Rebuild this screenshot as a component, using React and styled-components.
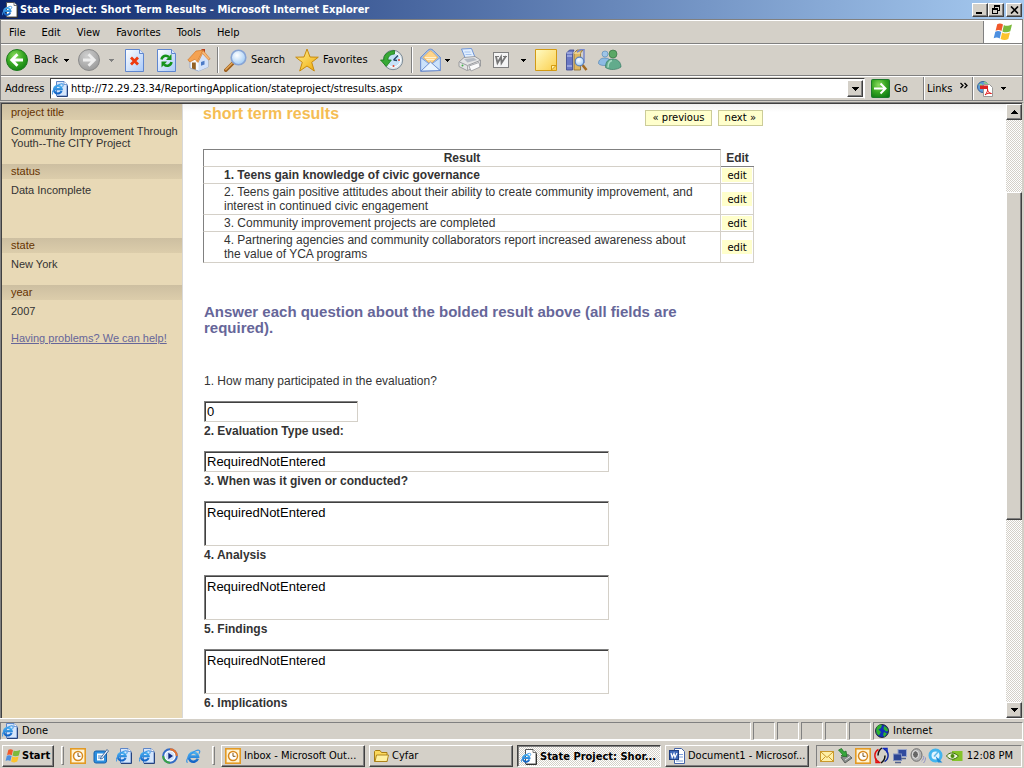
import React from "react";
import styled, { createGlobalStyle, css } from "styled-components";

const ui = `"DejaVu Sans Condensed", Tahoma, sans-serif`;
const arial = `"Liberation Sans", Arial, sans-serif`;
const verdana = `"DejaVu Sans", Verdana, sans-serif`;
const face = "#d4d0c8";

const GlobalStyle = createGlobalStyle`
  * { box-sizing: border-box; }
  body { margin: 0; background: ${face}; font: 11px/14px ${ui}; color: #000; }
  button { font: inherit; color: inherit; margin: 0; padding: 0; }
  svg { display: block; flex: none; }
`;

const raised = css`
  border: 1px solid;
  border-color: #fff #404040 #404040 #fff;
  box-shadow: inset -1px -1px #808080;
  background: ${face};
`;

const Desktop = styled.div`
  display: flex;
  flex-direction: column;
  height: 100vh;
`;

/* ---------- title bar ---------- */
const TitleBar = styled.header`
  display: flex;
  align-items: center;
  flex: none;
  height: 19px;
  padding: 0 2px;
  gap: 2px;
  background: linear-gradient(90deg, #0a246a, #a6caf0);
`;
const Title = styled.h1`
  flex: 1;
  margin: 0;
  font-size: 11px;
  line-height: 18px;
  color: #fff;
`;
const CaptionGroup = styled.div`
  display: flex;
`;
const CaptionButton = styled.button`
  ${raised}
  display: flex;
  align-items: center;
  justify-content: center;
  width: 16px;
  height: 14px;
`;

/* ---------- bars ---------- */
const Rebar = styled.div`
  flex: none;
  margin-right: 1px;
  border: 1px solid #808080;
  border-bottom: 0;
`;
const Band = styled.div`
  display: flex;
  border-top: 1px solid #fff;
  border-bottom: 1px solid #808080;
`;
const MenuBar = styled.nav`
  display: flex;
  flex: 1;
  align-items: center;
  height: 22px;
  padding: 1px 0 0 8px;
  gap: 16px;
`;
const MenuItem = styled.button`
  border: 0;
  background: none;
`;
const Throbber = styled.div`
  display: flex;
  align-items: center;
  justify-content: center;
  width: 39px;
  border-left: 1px solid #808080;
  background: #fff;
`;
const ToolBar = styled.div`
  display: flex;
  align-items: center;
  height: 30px;
  padding-left: 5px;
`;
const ToolButton = styled.button`
  display: flex;
  align-items: center;
  gap: ${(p) => p.$gap || 4}px;
  width: ${(p) => p.$width}px;
  height: 26px;
  border: 0;
  background: none;
  white-space: nowrap;
`;
const Divider = styled.div`
  width: 2px;
  height: 26px;
  margin: 0 ${(p) => p.$after || 5}px 0 0;
  border-left: 1px solid #808080;
  border-right: 1px solid #fff;
`;
const AddressBar = styled.form`
  display: flex;
  flex: 1;
  align-items: center;
  height: 23px;
  padding-left: 4px;
`;
const AddressLabel = styled.label`
  width: 45px;
`;
const Combo = styled.div`
  display: flex;
  align-items: center;
  flex: 1;
  height: 21px;
  padding: 0 1px 0 1px;
  gap: 3px;
  border: 1px solid;
  border-color: #404040 #fff ${face} #404040;
  background: #fff;
`;
const AddressInput = styled.input`
  flex: 1;
  min-width: 0;
  border: 0;
  padding: 0;
  background: none;
  font: 11px/14px ${ui};
  outline: 0;
`;
const DropButton = styled.button`
  ${raised}
  display: flex;
  align-items: center;
  justify-content: center;
  width: 16px;
  height: 17px;
`;
const GoButton = styled.button`
  display: flex;
  align-items: center;
  gap: 4px;
  width: 58px;
  height: 23px;
  padding-left: 6px;
  border: 0;
  background: none;
`;
const LinksCell = styled.button`
  display: flex;
  align-items: center;
  gap: 8px;
  width: 49px;
  height: 23px;
  padding-left: 3px;
  border: 0;
  border-left: 1px solid #808080;
  box-shadow: inset 1px 0 #fff;
  background: none;
`;
const PdfCell = styled(LinksCell)`
  width: 50px;
  padding-left: 4px;
`;

/* ---------- document ---------- */
const Viewport = styled.div`
  display: flex;
  flex: 1;
  min-height: 0;
  margin-top: 1px;
  border-top: 1px solid #808080;
  border-left: 1px solid #808080;
  border-right: 2px solid ${face};
`;
const Page = styled.div`
  display: flex;
  flex: 1;
  min-width: 0;
  overflow: hidden;
  border-top: 1px solid #404040;
  border-left: 1px solid #404040;
  background: #fff linear-gradient(#f1f1f1, #fff) 0 0 / 100% 8px no-repeat;
  font-family: ${arial};
  color: #333;
`;
const Sidebar = styled.aside`
  flex: none;
  width: 181px;
  border-right: 1px solid #d8d8d8;
  background: #e8d9b6;
  font-size: 11px;
  line-height: 12px;
`;
const SideHead = styled.h2`
  margin: 0;
  padding: 0 9px;
  font-size: 11px;
  font-weight: 400;
  line-height: ${(p) => (p.$first ? 16 : 15)}px;
  color: #663300;
  background: linear-gradient(#cdbfa1, #dccdab);
`;
const SideText = styled.p`
  margin: 0;
  padding: 5px 2px ${(p) => p.$bottom || 15}px 9px;
`;
const HelpLink = styled.a`
  margin-left: 9px;
  color: #666699;
`;
const Main = styled.main`
  width: 582px;
  padding: 2px 2px 0 20px;
`;
const Heading = styled.div`
  display: flex;
  align-items: flex-start;
  gap: 6px;
`;
const PageTitle = styled.h2`
  flex: 1;
  margin: 0;
  font-size: 16px;
  line-height: 16px;
  color: #f5bd53;
  white-space: nowrap;
`;
const NavButton = styled.button`
  height: 16px;
  margin-top: 4px;
  padding: 0 6px;
  border: 1px solid #cccc99;
  background: #ffffcc;
  font: 10px/14px ${verdana};
  color: #000;
`;
const ResultTable = styled.table`
  width: 551px;
  margin-top: 23px;
  border-spacing: 0;
  font-size: 12px;
  line-height: 14px;
  th { padding: 1px; }
  td { padding: 1px 18px 1px 20px; border-bottom: 1px solid ${face}; border-right: 1px solid ${face}; }
  td:first-child, th:first-child { border-left: 1px solid #808080; }
`;
const ResultHead = styled.th`
  border-top: 1px solid #808080;
  border-right: 1px solid ${face};
  border-bottom: 1px solid ${face};
`;
const EditHead = styled.th`
  width: 33px;
  border-bottom: 1px solid #808080;
`;
const ResultRow = styled.tr`
  font-weight: ${(p) => (p.$current ? 700 : 400)};
  td:last-child { padding: 0 1px; }
`;
const EditButton = styled.button`
  display: block;
  width: 30px;
  height: 14px;
  border: 0;
  background: #ffffcc;
  font: 10px/13px ${verdana};
  color: #000;
`;
const Instruction = styled.h3`
  width: 490px;
  margin: 41px 0 36px;
  padding-left: 1px;
  font-size: 15px;
  line-height: 16px;
  color: #666699;
`;
const Question = styled.div`
  display: flex;
  flex-direction: column;
  align-items: flex-start;
  padding-left: 1px;
  label {
    margin-bottom: 11px;
    font-size: 12px;
    line-height: 18px;
    font-weight: ${(p) => (p.$plain ? 400 : 700)};
  }
`;
const field = css`
  display: block;
  border: 1px solid;
  border-color: #808080 ${face} ${face} #808080;
  box-shadow: inset 1px 1px #404040;
  padding: 2px;
  background: #fff;
  font: 13px/16px ${arial};
  color: #000;
  outline: 0;
`;
const TextInput = styled.input`
  ${field}
  width: ${(p) => (p.$short ? 154 : 405)}px;
  height: 21px;
`;
const TextArea = styled.textarea`
  ${field}
  width: 405px;
  height: 45px;
  padding-top: 3px;
  resize: none;
  overflow: hidden;
`;

/* ---------- scroll bar ---------- */
const ScrollBar = styled.div`
  display: flex;
  flex-direction: column;
  flex: none;
  width: 16px;
  border-top: 1px solid #404040;
  background: repeating-conic-gradient(#fff 0 25%, ${face} 0 50%) 0 0 / 2px 2px;
`;
const ScrollButton = styled(DropButton)`
  flex: none;
  height: 16px;
`;
const Track = styled.div`
  flex: ${(p) => p.$share} 1 0;
`;
const Thumb = styled(Track)`
  ${raised}
`;

/* ---------- status bar ---------- */
const StatusBar = styled.footer`
  display: flex;
  flex: none;
  height: 22px;
  padding: 3px 1px 0 0;
  gap: 2px;
  border-top: 1px solid #fff;
`;
const StatusPanel = styled.div`
  display: flex;
  align-items: center;
  flex: ${(p) => (p.$width ? `0 0 ${p.$width}px` : 1)};
  gap: 4px;
  padding-left: 1px;
  border: 1px solid;
  border-color: #808080 #fff #fff #808080;
`;

/* ---------- task bar ---------- */
const TaskBar = styled.div`
  display: flex;
  align-items: center;
  flex: none;
  height: 28px;
  padding: 2px 2px 0;
  border-top: 1px solid #fff;
`;
const StartButton = styled.button`
  ${raised}
  display: flex;
  align-items: center;
  gap: 1px;
  width: 52px;
  height: 22px;
  padding-left: 2px;
  font-weight: 700;
`;
const Grip = styled.div`
  width: 3px;
  height: 19px;
  margin: 0 6px 0 7px;
  border: 1px solid;
  border-color: #fff #808080 #808080 #fff;
`;
const QuickLaunch = styled.div`
  display: flex;
  align-items: center;
  gap: 7px;
  width: 135px;
`;
const QuickButton = styled.button`
  border: 0;
  background: none;
`;
const Tasks = styled.div`
  display: flex;
  flex: 1;
  min-width: 0;
  gap: 4px;
`;
const TaskButton = styled.button`
  ${raised}
  display: flex;
  align-items: center;
  flex: 1 1 0;
  min-width: 0;
  gap: 3px;
  height: 22px;
  padding: 0 2px 0 3px;
  ${(p) => p.$active && css`
    border-color: #404040 #fff #fff #404040;
    box-shadow: inset 1px 1px #808080;
    background: repeating-conic-gradient(#fff 0 25%, ${face} 0 50%) 0 0 / 2px 2px;
    font-weight: 700;
    padding-top: 2px;
  `}
`;
const TaskText = styled.span`
  white-space: nowrap;
`;
const Tray = styled.div`
  display: flex;
  align-items: center;
  gap: 2px;
  width: 206px;
  height: 22px;
  margin-left: 7px;
  padding: 0 8px 0 2px;
  border: 1px solid;
  border-color: #808080 #fff #fff #808080;
`;
const Clock = styled.time`
  margin-left: auto;
  white-space: nowrap;
`;

/* ---------- drawings ---------- */
const Caret = ({ dim }) => (
  <svg width="5" height="3" viewBox="0 0 5 3" shapeRendering="crispEdges"><path d="M0 0h5L2.5 3z" fill={dim ? "#808080" : "#000"} /></svg>
);
const Arrow = ({ up }) => (
  <svg width="7" height="4" viewBox="0 0 7 4" shapeRendering="crispEdges"><path d={up ? "M0 4h7L3.5 0z" : "M0 0h7L3.5 4z"} /></svg>
);
const Defs = () => (
  <svg width="0" height="0" style={{ position: "absolute" }} aria-hidden="true">
    <defs>
      <radialGradient id="gGreen" cx=".4" cy=".3" r=".8"><stop offset="0" stopColor="#8ddc60" /><stop offset=".5" stopColor="#37a722" /><stop offset="1" stopColor="#0c7a10" /></radialGradient>
      <radialGradient id="gGrey" cx=".4" cy=".3" r=".8"><stop offset="0" stopColor="#cfcfcf" /><stop offset="1" stopColor="#959595" /></radialGradient>
      <linearGradient id="gPage" x2="1" y2="1"><stop offset="0" stopColor="#ffffff" /><stop offset="1" stopColor="#a9c9f8" /></linearGradient>
      <linearGradient id="gNote" x2="1" y2="1"><stop offset="0" stopColor="#fffbc4" /><stop offset="1" stopColor="#fbcf4c" /></linearGradient>
      <linearGradient id="gGold" x2="1" y2="1"><stop offset="0" stopColor="#fff39a" /><stop offset="1" stopColor="#f0a800" /></linearGradient>
      <radialGradient id="gLens" cx=".4" cy=".35" r=".7"><stop offset="0" stopColor="#ffffff" /><stop offset="1" stopColor="#9cc9f5" /></radialGradient>
      <linearGradient id="gE" x2="0" y2="1"><stop offset="0" stopColor="#4cb4f2" /><stop offset="1" stopColor="#1363c6" /></linearGradient>
    </defs>
  </svg>
);
const EMark = () => (
  <>
    <path d="M12.300 10.300A4.600 4.600 0 1 1 12.500 8.300H4.500" fill="none" stroke="url(#gE)" strokeWidth="2.600" />
    <path d="M2.200 14.200C.2 13.800 1.400 9.600 5 6c3.400-3.400 7.600-5 8.900-3.700.7.7.3 1.800-.4 3" fill="none" stroke="#3a96e6" strokeWidth="1.200" />
  </>
);
const IEIcon = () => (
  <svg width="16" height="16" viewBox="0 0 16 16"><g transform="translate(.5 .3)"><EMark /></g></svg>
);
const IEPage = ({ plain }) => (
  <svg width="16" height="16" viewBox="0 0 16 16">
    <path d="M4.500.500h7.500l3 3v11.500h-10.500z" fill={plain ? "#fff" : "#d6e6fb"} stroke={plain ? "#555" : "#5d86c8"} />
    <path d="M12 .500v3h3" fill="#fff" stroke={plain ? "#555" : "#5d86c8"} strokeWidth=".8" />
    <path d="M5 15.500h10.500V4.500" fill="none" stroke={plain ? "#333" : "#27427c"} />
    <g transform={plain ? "translate(-.5 3) scale(.72)" : "translate(-.8 1.200) scale(.84)"}><EMark /></g>
  </svg>
);
const WinFlag = ({ size = 20 }) => (
  <svg width={size} height={size} viewBox="0 0 20 20">
    <path d="M4.200 2.200C6.300 1 8.200 1.300 10 2.600L8.500 9C6.700 7.800 4.700 7.700 2.600 8.700z" fill="#f0592b" />
    <path d="M10.900 3c1.900 1.200 4.200 1.200 8.100-.4l-1.700 6.700c-2.800 1.300-5.600 1.300-7.900.100z" fill="#7cba3c" />
    <path d="M2.300 9.700c2.200-1.100 4.100-.8 5.900.400L6.700 16.400C4.900 15.200 2.900 15 .700 16.200z" fill="#4c8fe0" />
    <path d="M9.100 10.600c2.200 1.200 4.800 1.200 7.900-.100l-1.700 6.500c-2.700 1.500-5.400 1.200-7.700-.100z" fill="#fcc32c" />
  </svg>
);
const RoundArrow = ({ back }) => (
  <svg width="22" height="22" viewBox="0 0 22 22">
    <circle cx="11" cy="11" r="10.500" fill={back ? "url(#gGreen)" : "url(#gGrey)"} stroke={back ? "#1d7a1d" : "#8a8a8a"} />
    <path d={back ? "M17 11H6.500M11.500 5.200 5.700 11l5.800 5.800" : "M5 11h10.500M10.500 5.200l5.800 5.800-5.800 5.800"} fill="none" stroke={back ? "#fff" : "#eee"} strokeWidth="2.800" />
  </svg>
);
const StopIcon = () => (
  <svg width="19" height="23" viewBox="0 0 19 23">
    <path d="M.500.500h14l4 4v18H.500z" fill="url(#gPage)" stroke="#5f86cf" /><path d="M14.500.500v4h4" fill="#dbe8fc" stroke="#5f86cf" />
    <path d="m6 8.500 7 7m0-7-7 7" stroke="#ee3a10" strokeWidth="2.800" />
  </svg>
);
const RefreshIcon = () => (
  <svg width="19" height="23" viewBox="0 0 19 23">
    <path d="M.500.500h14l4 4v18H.500z" fill="url(#gPage)" stroke="#5f86cf" /><path d="M14.500.500v4h4" fill="#dbe8fc" stroke="#5f86cf" />
    <path d="M4.500 10.500C5 7 9 5.500 12 8" fill="none" stroke="#14921a" strokeWidth="2.500" /><path d="M14.500 5v6H9z" fill="#14921a" />
    <path d="M14.500 13c-.5 3.500-4.500 5-7.500 2.500" fill="none" stroke="#14921a" strokeWidth="2.500" /><path d="M4.500 18.500v-6H10z" fill="#14921a" />
  </svg>
);
const HomeIcon = () => (
  <svg width="24" height="24" viewBox="0 0 24 24">
    <path d="M14.500 1h3.500v6l-3.500-2z" fill="#b63c1c" />
    <path d="M3 12v8l8.500 3 9.500-4V10L14 3z" fill="#f6f9ff" stroke="#8aa2cc" strokeWidth=".8" />
    <path d="M11.500 13.500V23l9.500-4V11l-5.500-6z" fill="#d3e2f9" />
    <path d="M.800 12 9 3l7-.8L10.500 14 8 11.200 3 14z" fill="#f4a252" stroke="#d2792a" strokeWidth=".7" />
    <path d="M16 2.200 23.200 11l-1.700 1L15.500 5.500 11 14.500l-.800-1z" fill="#f7b878" stroke="#d2792a" strokeWidth=".6" />
    <path d="M5 14.500h3.800v7.200L5 20.400z" fill="#936025" /><path d="m14 14 3.500-1.300v3.700L14 17.800z" fill="#4c7bc7" />
  </svg>
);
const SearchIcon = () => (
  <svg width="23" height="23" viewBox="0 0 23 23">
    <path d="m1.800 21.200 7-7" stroke="#9c5f1e" strokeWidth="3.600" strokeLinecap="round" /><path d="m1.800 20.500 6.500-6.500" stroke="#e8aa5a" strokeWidth="1.200" strokeLinecap="round" />
    <circle cx="14.500" cy="8.500" r="7.300" fill="url(#gLens)" stroke="#88a4d4" strokeWidth="1.600" />
  </svg>
);
const StarIcon = () => (
  <svg width="24" height="24" viewBox="0 0 24 24"><path d="m12 1 3 8 8.300.2-6.600 5.100L19.300 23 12 18l-7.300 5 2.600-8.700L.7 9.200 9 9z" fill="url(#gGold)" stroke="#c88a0c" /></svg>
);
const HistoryIcon = () => (
  <svg width="24" height="22" viewBox="0 0 24 22">
    <circle cx="13" cy="11" r="9.700" fill="#e0e8ee" stroke="#7c8a94" /><circle cx="13.500" cy="11" r="7" fill="#c6e2f8" stroke="#fff" />
    <path d="M13.500 11 18 6.500M13.500 11l3.500.500" stroke="#27476c" strokeWidth="1.300" /><circle cx="13.500" cy="17" r="1" fill="#e2452c" /><circle cx="19" cy="11" r="1" fill="#e2452c" />
    <path d="M14.500 1.500C7 2.500 3.500 6 3.800 11H.500l5.800 6.500 5-6.500H8c-.2-3 1.500-5.500 6.500-6z" fill="#39a935" stroke="#187a1b" strokeWidth=".8" />
  </svg>
);
const MailIcon = () => (
  <svg width="21" height="24" viewBox="0 0 21 24">
    <path d="M.700 9.500 8 2.200c1.500-1.400 3.500-1.400 5 0l7.300 7.300v13L.700 23.200z" fill="#a7cbf4" stroke="#6486cb" />
    <path d="M3 9.500 9 3.500c1-.9 2-.9 3 0l6 6-7.500 6.500z" fill="#ffd58b" stroke="#de9c45" strokeWidth=".7" /><path d="M5 9.500h11M6.500 11.500h8" stroke="#fff1d0" />
    <path d="M.700 9.500 9 15.800.700 23.200zM20.300 9.500 12 15.800l8.300 6.700z" fill="#cbe2fb" stroke="#6486cb" strokeWidth=".7" /><path d="m1 23 9.500-9L20 22.500z" fill="#e9f4ff" stroke="#6486cb" strokeWidth=".8" />
  </svg>
);
const PrinterIcon = () => (
  <svg width="24" height="24" viewBox="0 0 24 24">
    <path d="m3.500 1 10-.5 4 10-9.500 1.500z" fill="#e2efff" stroke="#6f95d6" /><path d="M6.500 4h6M7.500 6.500h6" stroke="#a6c4f0" />
    <path d="m1 14 5-4.500 11-1 5.500 3.500v6L9 22.500l-8-4z" fill="#e5e5e5" stroke="#8b8d90" strokeWidth=".8" /><path d="m1.500 14 8 3.500 12.500-5" fill="none" stroke="#9b9da1" />
    <path d="M9.500 17.500V22" stroke="#aaa" /><path d="m6 11 10-1 3 2-9.500 2.500z" fill="#b4bac3" /><path d="m11 18 10-3.500 1 4.500-9 4z" fill="#fafafa" stroke="#898b90" strokeWidth=".7" /><circle cx="4.500" cy="17.500" r="1" fill="#42b04a" />
  </svg>
);
const EditWIcon = () => (
  <svg width="16" height="16" viewBox="0 0 16 16"><rect x=".5" y=".5" width="15" height="15" fill="#f5f5f5" stroke="#808080" /><path d="M3 4.500 4.500 11 8 5l.5 6 4.500-7" fill="none" stroke="#777" strokeWidth="1.800" /><path d="M2 4.500h4M10 4.500h4" stroke="#777" /></svg>
);
const NoteIcon = () => (
  <svg width="22" height="22" viewBox="0 0 22 22"><path d="M.500.500h21v21H.500z" fill="url(#gNote)" stroke="#d29a14" /><path d="M16.500 21v-4.500H21z" fill="#fff2a8" stroke="#d29a14" /></svg>
);
const BooksIcon = () => (
  <svg width="22" height="22" viewBox="0 0 22 22">
    <path d="m.500 4 3-3h4.500L6.500 4v17h-6z" fill="#6a78c4" stroke="#3a4890" strokeWidth=".8" /><path d="M.500 4h6M1 7h5M1 17h5" stroke="#c2caf3" />
    <path d="m8 4 3-3h6l-2.500 3v17H8z" fill="#e0b862" stroke="#8a6a28" strokeWidth=".8" /><path d="M8 4h6.500" stroke="#fbeab8" /><path d="m11 3 4-2.500h3V14" fill="none" stroke="#7787cc" strokeWidth="1.500" />
    <path d="m16.500 16 4 5" stroke="#a36a20" strokeWidth="2.600" /><circle cx="13.500" cy="12.500" r="4.300" fill="url(#gLens)" stroke="#5d84be" strokeWidth="1.200" />
  </svg>
);
const PeopleIcon = () => (
  <svg width="24" height="22" viewBox="0 0 24 22">
    <circle cx="7" cy="5" r="3" fill="#9ec5e8" stroke="#4f82b2" strokeWidth=".6" /><path d="M.500 14.500c0-4 3-5.500 6.500-5.500s6 2 6 5l-5 2.500c-3 0-6 0-7.500-2z" fill="#8dbbe4" stroke="#467aad" strokeWidth=".6" />
    <circle cx="15" cy="5" r="4" fill="#5aa865" stroke="#2b6a3a" strokeWidth=".6" /><path d="M7.500 18.500c0-6.500 3-8.500 7.500-8.500s8 3 8 8c-4 3-11 3.500-15.500.5z" fill="#62ab8c" stroke="#28705b" strokeWidth=".6" /><path d="M10 18.500c0-4 1.500-6.500 4-7" fill="none" stroke="#a8dcc4" strokeWidth="1.500" />
  </svg>
);
const GoIcon = () => (
  <svg width="19" height="19" viewBox="0 0 19 19"><rect x=".5" y=".5" width="18" height="18" rx="1" fill="url(#gGreen)" stroke="#1c7a2a" /><path d="M3 9.500h11M9.500 4.500l5 5-5 5" fill="none" stroke="#fff" strokeWidth="2" /></svg>
);
const PdfIcon = () => (
  <svg width="16" height="16" viewBox="0 0 16 16">
    <circle cx="6" cy="6" r="5.500" fill="#5f9bd8" stroke="#376296" /><path d="M2 4c3-2 4 2 2 4M7 1c2 2 4 2 4 2" stroke="#8ccf8a" fill="none" strokeWidth="1.500" />
    <path d="M6.500 3.500h6l3 3v9h-9z" fill="#fff" stroke="#999" /><path d="M3 4.500h8v3.500H3z" fill="#d22" /><path d="M8 14c2-2 3-5 2.500-6 0 3 2 4.500 4 4.500-2-.8-5 0-6.500 1.500z" fill="none" stroke="#e01818" />
  </svg>
);
const GlobeIcon = () => (
  <svg width="14" height="14" viewBox="0 0 14 14"><circle cx="7" cy="7" r="6.500" fill="#1130b8" stroke="#111" strokeWidth=".8" /><path d="M2 3c2-3 5-2 5-2L6 4 3.500 5.500 6 8l-2 3.500C1 10 .5 6 2 3zM9 2c3 1 4 3 4 5l-2 .5L8.500 5zM9 8l3 1.500L9.500 13 8 11z" fill="#2fb32f" /></svg>
);
const OutlookIcon = () => (
  <svg width="16" height="16" viewBox="0 0 16 16"><rect x=".8" y=".8" width="14.400" height="14.400" fill="#fff4d6" stroke="#e39a24" strokeWidth="1.600" /><circle cx="8" cy="8" r="4.500" fill="#fff" stroke="#d8891c" strokeWidth="1.500" /><path d="M8 5v3.300h2.500" fill="none" stroke="#7d5518" /></svg>
);
const DesktopIcon = () => (
  <svg width="16" height="16" viewBox="0 0 16 16"><rect x="1" y="3" width="12.500" height="12" rx="2" fill="#2d8fdf" stroke="#1761ac" /><path d="M4 5.500h7v7H4z" fill="#fff" /><path d="M5 8h4M5 10h3" stroke="#4c8ac7" /><path d="m8 9.500 6-8 1.500 1.500-6 7.500-2 .5z" fill="#e8f0fa" stroke="#214f8c" strokeWidth=".8" /></svg>
);
const MediaIcon = () => (
  <svg width="16" height="16" viewBox="0 0 16 16"><circle cx="8" cy="8" r="6.800" fill="#fff" stroke="#336bc4" strokeWidth="2" /><path d="M8 1.200A6.800 6.800 0 0 1 14.800 8" fill="none" stroke="#e7722c" strokeWidth="2" /><path d="M1.200 8A6.800 6.800 0 0 0 8 14.800" fill="none" stroke="#3aa347" strokeWidth="2" /><circle cx="8" cy="8" r="4.500" fill="#cfe1fa" /><path d="M6.300 4.800 11 8l-4.700 3.200z" fill="#122b80" /></svg>
);
const FolderIcon = () => (
  <svg width="16" height="16" viewBox="0 0 16 16"><path d="M1.500 13.500v-10l1-1H7l1.500 2h5.500v9z" fill="#fbd85c" stroke="#a77c12" /><path d="m2 13.500 1.500-6.500h12L14 13.500z" fill="#fff0a0" stroke="#a77c12" strokeWidth=".9" /></svg>
);
const WordIcon = () => (
  <svg width="16" height="16" viewBox="0 0 16 16"><path d="M5.500.500h7l3 3v12h-10z" fill="#fff" stroke="#4464a8" /><path d="M10 6.500h4M10 9h4M7 13h7" stroke="#7ea0da" /><rect x=".5" y="2.500" width="9" height="9" fill="#3c67b8" stroke="#1f3f83" /><path d="m2 5 1.200 4.500L5 5.500l1 4L8 5" fill="none" stroke="#fff" strokeWidth="1.200" /></svg>
);
const TrayMail = () => (
  <svg width="16" height="16" viewBox="0 0 16 16"><rect x="1.500" y="3.500" width="13" height="10" fill="#fff0a6" stroke="#c9992c" /><path d="m2 4 6 5.500L14 4M2 13l4.500-4.500M14 13 9.500 8.500" fill="none" stroke="#c9992c" /></svg>
);
const TrayPlug = () => (
  <svg width="16" height="16" viewBox="0 0 16 16"><path d="m4 9.500 7-3 4 3.500-7 5z" fill="#8a8f8c" stroke="#4a4d4b" strokeWidth=".8" /><path d="m1.500 2 3-1.500L7 4l2-1 1 5.500-6-.5 1.500-1.500z" fill="#38a83c" stroke="#176a1d" strokeWidth=".7" /><path d="m8 12 5-3.500" stroke="#ddd" /></svg>
);
const TraySync = () => (
  <svg width="17" height="17" viewBox="0 0 17 17"><path d="M6 15A7 7 0 0 1 5.500 2.500" fill="none" stroke="#e01010" strokeWidth="1.500" /><path d="M11 2A7 7 0 0 1 11.500 14.500" fill="none" stroke="#1028a0" strokeWidth="1.500" /><path d="M9 1C6 3 5 5 5 8.500M8 16c3-2 4-4 4-7.500" fill="none" stroke="#111" strokeWidth="1.500" /><path d="M3 11.500v4h4.500" fill="none" stroke="#e01010" strokeWidth="1.500" /><path d="M14 5.500v-4H9.500" fill="none" stroke="#1028c0" strokeWidth="1.500" /></svg>
);
const TrayNet = () => (
  <svg width="16" height="16" viewBox="0 0 16 16"><rect x="6" y="1.500" width="8.500" height="7" fill="#324c9e" stroke="#9aa7cd" /><rect x="1.500" y="6" width="8" height="6.500" fill="#2c4593" stroke="#8694bf" /><path d="M3 14.500h6M9 10.500h5" stroke="#55648c" strokeWidth="1.500" /></svg>
);
const TraySound = () => (
  <svg width="16" height="16" viewBox="0 0 16 16"><ellipse cx="6.500" cy="7" rx="5.500" ry="6.300" fill="#b4b4b4" stroke="#707070" /><ellipse cx="5.500" cy="6.500" rx="3" ry="3.800" fill="#666" stroke="#eee" /><path d="M11.500 13c1.500-1 2.500-3 2.200-5M13.500 15c1.500-1.500 2-3.500 2-5.500" fill="none" stroke="#8f92c5" /></svg>
);
const TrayQT = () => (
  <svg width="16" height="16" viewBox="0 0 16 16"><circle cx="7.500" cy="7.500" r="5.500" fill="#e1f4ff" stroke="#42b4ee" strokeWidth="3" /><path d="m7.500 8 7 6.500H10z" fill="#1f8ad6" /><path d="M10 4 6 8.500" stroke="#5eb9ea" strokeWidth="1.500" /></svg>
);
const TrayNvidia = () => (
  <svg width="17" height="14" viewBox="0 0 17 14"><path d="M6 2h10.500v10H6z" fill="#84c32b" /><path d="M.500 7C3 3 8 3 12.500 7 8.500 11.500 3.500 11 .500 7z" fill="#eef6e0" stroke="#3c6b0b" /><circle cx="6.500" cy="7" r="2" fill="#4a8a0e" /></svg>
);

const results = [
  ["1. Teens gain knowledge of civic governance", true],
  ["2. Teens gain positive attitudes about their ability to create community improvement, and interest in continued civic engagement"],
  ["3. Community improvement projects are completed"],
  ["4. Partnering agencies and community collaborators report increased awareness about the value of YCA programs"],
];
const essays = ["3. When was it given or conducted?", "4. Analysis", "5. Findings", "6. Implications"];

export default function App() {
  return (
    <Desktop>
      <GlobalStyle />
      <Defs />
      <TitleBar>
        <IEPage plain />
        <Title>State Project: Short Term Results - Microsoft Internet Explorer</Title>
        <CaptionGroup>
          <CaptionButton aria-label="Minimize"><svg width="10" height="9"><path d="M1 7h6v2H1z" /></svg></CaptionButton>
          <CaptionButton aria-label="Restore"><svg width="10" height="9" shapeRendering="crispEdges"><path d="M3 0h6v6H7V5h1V2H4v1H3zM1 3h6v6H1zM2 5v3h4V5z" fillRule="evenodd" /></svg></CaptionButton>
        </CaptionGroup>
        <CaptionButton aria-label="Close"><svg width="9" height="8"><path d="m1 .5 7 7m0-7-7 7" stroke="#000" strokeWidth="1.600" /></svg></CaptionButton>
      </TitleBar>

      <Rebar>
        <Band>
          <MenuBar>
            {["File", "Edit", "View", "Favorites", "Tools", "Help"].map((m) => <MenuItem key={m}>{m}</MenuItem>)}
          </MenuBar>
          <Throbber><WinFlag /></Throbber>
        </Band>
        <Band>
          <ToolBar>
            <ToolButton $width={72} $gap={6}><RoundArrow back />Back <Caret /></ToolButton>
            <ToolButton $width={47} $gap={9}><RoundArrow /><Caret dim /></ToolButton>
            <ToolButton $width={32} aria-label="Stop"><StopIcon /></ToolButton>
            <ToolButton $width={30} aria-label="Refresh"><RefreshIcon /></ToolButton>
            <ToolButton $width={30} aria-label="Home"><HomeIcon /></ToolButton>
            <Divider />
            <ToolButton $width={71}><SearchIcon />Search</ToolButton>
            <ToolButton $width={85}><StarIcon />Favorites</ToolButton>
            <ToolButton $width={31} aria-label="History"><HistoryIcon /></ToolButton>
            <Divider $after={7} />
            <ToolButton $width={38} aria-label="Mail"><MailIcon /><Caret /></ToolButton>
            <ToolButton $width={35} aria-label="Print"><PrinterIcon /></ToolButton>
            <ToolButton $width={42} $gap={12} aria-label="Edit"><EditWIcon /><Caret /></ToolButton>
            <ToolButton $width={31} aria-label="Discuss"><NoteIcon /></ToolButton>
            <ToolButton $width={32} aria-label="Research"><BooksIcon /></ToolButton>
            <ToolButton $width={24} aria-label="Messenger"><PeopleIcon /></ToolButton>
          </ToolBar>
        </Band>
        <Band>
          <AddressBar onSubmit={(e) => e.preventDefault()}>
            <AddressLabel htmlFor="address">Address</AddressLabel>
            <Combo>
              <IEPage />
              <AddressInput id="address" defaultValue="http://72.29.23.34/ReportingApplication/stateproject/stresults.aspx" />
              <DropButton type="button" aria-label="Show addresses"><Arrow /></DropButton>
            </Combo>
            <GoButton><GoIcon />Go</GoButton>
            <LinksCell type="button">Links
              <svg width="8" height="14" viewBox="0 0 8 14"><path d="m.5 1 2.500 2.500L.5 6M4.500 1 7 3.500 4.500 6" fill="none" stroke="#000" strokeWidth="1.300" /></svg>
            </LinksCell>
            <PdfCell type="button" aria-label="Convert to PDF"><PdfIcon /><Caret /></PdfCell>
          </AddressBar>
        </Band>
      </Rebar>

      <Viewport>
        <Page>
          <Sidebar>
            <SideHead $first>project title</SideHead>
            <SideText>Community Improvement Through Youth--The CITY Project</SideText>
            <SideHead>status</SideHead>
            <SideText $bottom={42}>Data Incomplete</SideText>
            <SideHead>state</SideHead>
            <SideText>New York</SideText>
            <SideHead>year</SideHead>
            <SideText>2007</SideText>
            <HelpLink href="#help">Having problems? We can help!</HelpLink>
          </Sidebar>
          <Main>
            <Heading>
              <PageTitle>short term results</PageTitle>
              <NavButton>« previous</NavButton>
              <NavButton>next »</NavButton>
            </Heading>
            <ResultTable>
              <thead><tr><ResultHead>Result</ResultHead><EditHead>Edit</EditHead></tr></thead>
              <tbody>
                {results.map(([text, current]) => (
                  <ResultRow key={text} $current={current}>
                    <td>{text}</td>
                    <td><EditButton>edit</EditButton></td>
                  </ResultRow>
                ))}
              </tbody>
            </ResultTable>
            <Instruction>Answer each question about the bolded result above (all fields are required).</Instruction>
            <Question $plain>
              <label htmlFor="q1">1. How many participated in the evaluation?</label>
              <TextInput id="q1" $short defaultValue="0" />
            </Question>
            <Question>
              <label htmlFor="q2">2. Evaluation Type used:</label>
              <TextInput id="q2" defaultValue="RequiredNotEntered" />
            </Question>
            {essays.map((q, i) => (
              <Question key={q}>
                <label htmlFor={`q${i + 3}`}>{q}</label>
                <TextArea id={`q${i + 3}`} defaultValue="RequiredNotEntered" />
              </Question>
            ))}
          </Main>
        </Page>
        <ScrollBar>
          <ScrollButton aria-label="Scroll up"><Arrow up /></ScrollButton>
          <Track $share={72} />
          <Thumb $share={327} />
          <Track $share={183} />
          <ScrollButton aria-label="Scroll down"><Arrow /></ScrollButton>
        </ScrollBar>
      </Viewport>

      <StatusBar>
        <StatusPanel><IEPage />Done</StatusPanel>
        {[0, 1, 2, 3, 4].map((n) => <StatusPanel key={n} $width={22} />)}
        <StatusPanel $width={150}><GlobeIcon />Internet</StatusPanel>
      </StatusBar>

      <TaskBar>
        <StartButton><WinFlag size={16} />Start</StartButton>
        <Grip />
        <QuickLaunch>
          {[OutlookIcon, DesktopIcon, IEPage, IEPage, MediaIcon, IEIcon].map((Icon, i) => (
            <QuickButton key={i}><Icon /></QuickButton>
          ))}
        </QuickLaunch>
        <Grip />
        <Tasks>
          <TaskButton><OutlookIcon /><TaskText>Inbox - Microsoft Out...</TaskText></TaskButton>
          <TaskButton><FolderIcon /><TaskText>Cyfar</TaskText></TaskButton>
          <TaskButton $active><IEPage plain /><TaskText>State Project: Shor...</TaskText></TaskButton>
          <TaskButton><WordIcon /><TaskText>Document1 - Microsof...</TaskText></TaskButton>
        </Tasks>
        <Tray>
          <TrayMail /><TrayPlug /><OutlookIcon /><TraySync /><TrayNet /><TraySound /><TrayQT /><TrayNvidia />
          <Clock>12:08 PM</Clock>
        </Tray>
      </TaskBar>
    </Desktop>
  );
}
